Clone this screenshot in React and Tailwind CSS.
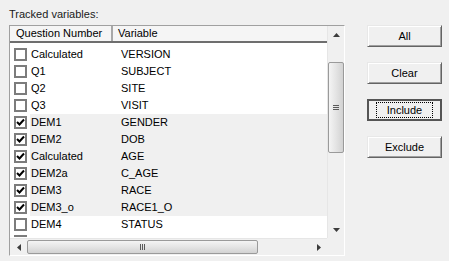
import React from 'react';

const rows = [
    { q: 'Calculated', v: 'VERSION', on: false },
    { q: 'Q1', v: 'SUBJECT', on: false },
    { q: 'Q2', v: 'SITE', on: false },
    { q: 'Q3', v: 'VISIT', on: false },
    { q: 'DEM1', v: 'GENDER', on: true },
    { q: 'DEM2', v: 'DOB', on: true },
    { q: 'Calculated', v: 'AGE', on: true },
    { q: 'DEM2a', v: 'C_AGE', on: true },
    { q: 'DEM3', v: 'RACE', on: true },
    { q: 'DEM3_o', v: 'RACE1_O', on: true },
    { q: 'DEM4', v: 'STATUS', on: false },
];

const Check = ({ on }) => (
    <div className="w-[13px] h-[13px] border-2 border-[#7c7c7c] bg-white flex items-center justify-center shrink-0">
        {on && (
            <svg width="9" height="9" viewBox="0 0 9 9">
                <path d="M1 4 L3.5 6.5 L8 1.5" stroke="#000" strokeWidth="2" fill="none" />
            </svg>
        )}
    </div>
);

const Arrow = ({ dir }) => {
    const pts = {
        up: '0,4 3.5,0 7,4',
        down: '0,0 3.5,4 7,0',
        left: '4,0 0,3.5 4,7',
        right: '0,0 4,3.5 0,7',
    }[dir];
    const w = dir === 'up' || dir === 'down' ? 7 : 4;
    const h = dir === 'up' || dir === 'down' ? 4 : 7;
    return (
        <svg width={w} height={h} viewBox={`0 0 ${w} ${h}`}>
            <polygon points={pts} fill="#3c3c3c" />
        </svg>
    );
};

const Button = ({ label, active }) => (
    <button
        className={
            'w-[75px] h-[22px] bg-[#f0f0f0] text-[11px] text-black flex items-center justify-center ' +
            (active
                ? 'border-2 border-[#555555]'
                : 'border border-t-[#e8e8e8] border-l-[#e8e8e8] border-b-[#646464] border-r-[#646464] shadow-[inset_1px_1px_0_#ffffff,inset_-1px_-1px_0_#a0a0a0]')
        }
    >
        {active ? (
            <span className="border border-dotted border-black px-[10px] leading-[14px]">{label}</span>
        ) : (
            label
        )}
    </button>
);

export default function App() {
    return (
        <div className="w-[449px] h-[261px] bg-[#f0f0f0] flex font-['Liberation_Sans',Arial,sans-serif] text-[11px] text-black">
            <div className="pl-[9px] pt-[7px] flex flex-col">
                <div className="h-[18px] leading-[14px] text-[#1a1a1a]">Tracked variables:</div>
                <div className="w-[336px] h-[231px] border border-t-[#a0a0a0] border-l-[#a0a0a0] border-b-[#ffffff] border-r-[#ffffff] grid grid-cols-[1fr_17px] grid-rows-[1fr_17px] bg-white overflow-hidden">
                    <div className="overflow-hidden bg-white">
                        <div className="h-[17px] flex bg-[#f5f5f5] border-b-2 border-[#6e6e6e]">
                            <div className="w-[103px] pl-[6px] leading-[15px] border-r-2 border-[#a8a8a8]">Question Number</div>
                            <div className="flex-1 pl-[5px] leading-[15px]">Variable</div>
                        </div>
                        <div className="pt-[3px]">
                            {rows.map((r, i) => (
                                <div key={i} className="h-[17px] flex items-center">
                                    <div className="w-[20px] pl-[4px] h-full flex items-center bg-white">
                                        <Check on={r.on} />
                                    </div>
                                    <div className={'flex-1 h-full flex items-center ' + (r.on ? 'bg-[#f0f0f0]' : 'bg-white')}>
                                        <div className="w-[88px] pl-[1px]">{r.q}</div>
                                        <div className="pl-[3px]">{r.v}</div>
                                    </div>
                                </div>
                            ))}
                            <div className="h-[4px] overflow-hidden flex items-start">
                                <div className="w-[20px] pl-[4px] pt-[2px]">
                                    <div className="w-[13px] h-[2px] bg-[#7c7c7c]" />
                                </div>
                            </div>
                        </div>
                    </div>
                    <div className="bg-[#f0f0f0] flex flex-col border-l border-[#e6e6e6]">
                        <div className="h-[17px] flex items-center justify-center"><Arrow dir="up" /></div>
                        <div className="flex-1 pt-[19px]">
                            <div className="h-[91px] rounded-[2px] border border-[#9a9a9a] bg-gradient-to-r from-[#f4f4f4] via-[#e4e4e4] to-[#d2d2d2] flex items-center justify-center">
                                <div className="flex flex-col gap-[1px]">
                                    <div className="w-[6px] h-[1px] bg-[#5a5a5a]" />
                                    <div className="w-[6px] h-[1px] bg-[#5a5a5a]" />
                                    <div className="w-[6px] h-[1px] bg-[#5a5a5a]" />
                                </div>
                            </div>
                        </div>
                        <div className="h-[17px] flex items-center justify-center"><Arrow dir="down" /></div>
                    </div>
                    <div className="bg-[#f0f0f0] flex items-stretch border-t border-[#e6e6e6]">
                        <div className="w-[17px] flex items-center justify-center"><Arrow dir="left" /></div>
                        <div className="flex-1 pr-[52px] pt-[1px] pb-[1px]">
                            <div className="h-full rounded-[2px] border border-[#9a9a9a] bg-gradient-to-b from-[#f4f4f4] via-[#e4e4e4] to-[#d2d2d2] flex items-center justify-center">
                                <div className="flex gap-[1px]">
                                    <div className="w-[1px] h-[6px] bg-[#5a5a5a]" />
                                    <div className="w-[1px] h-[6px] bg-[#5a5a5a]" />
                                    <div className="w-[1px] h-[6px] bg-[#5a5a5a]" />
                                </div>
                            </div>
                        </div>
                        <div className="w-[17px] flex items-center justify-center"><Arrow dir="right" /></div>
                    </div>
                    <div className="bg-[#f0f0f0]" />
                </div>
            </div>
            <div className="ml-[22px] pt-[25px] flex flex-col gap-[15px]">
                <Button label="All" />
                <Button label="Clear" />
                <Button label="Include" active />
                <Button label="Exclude" />
            </div>
        </div>
    );
}
